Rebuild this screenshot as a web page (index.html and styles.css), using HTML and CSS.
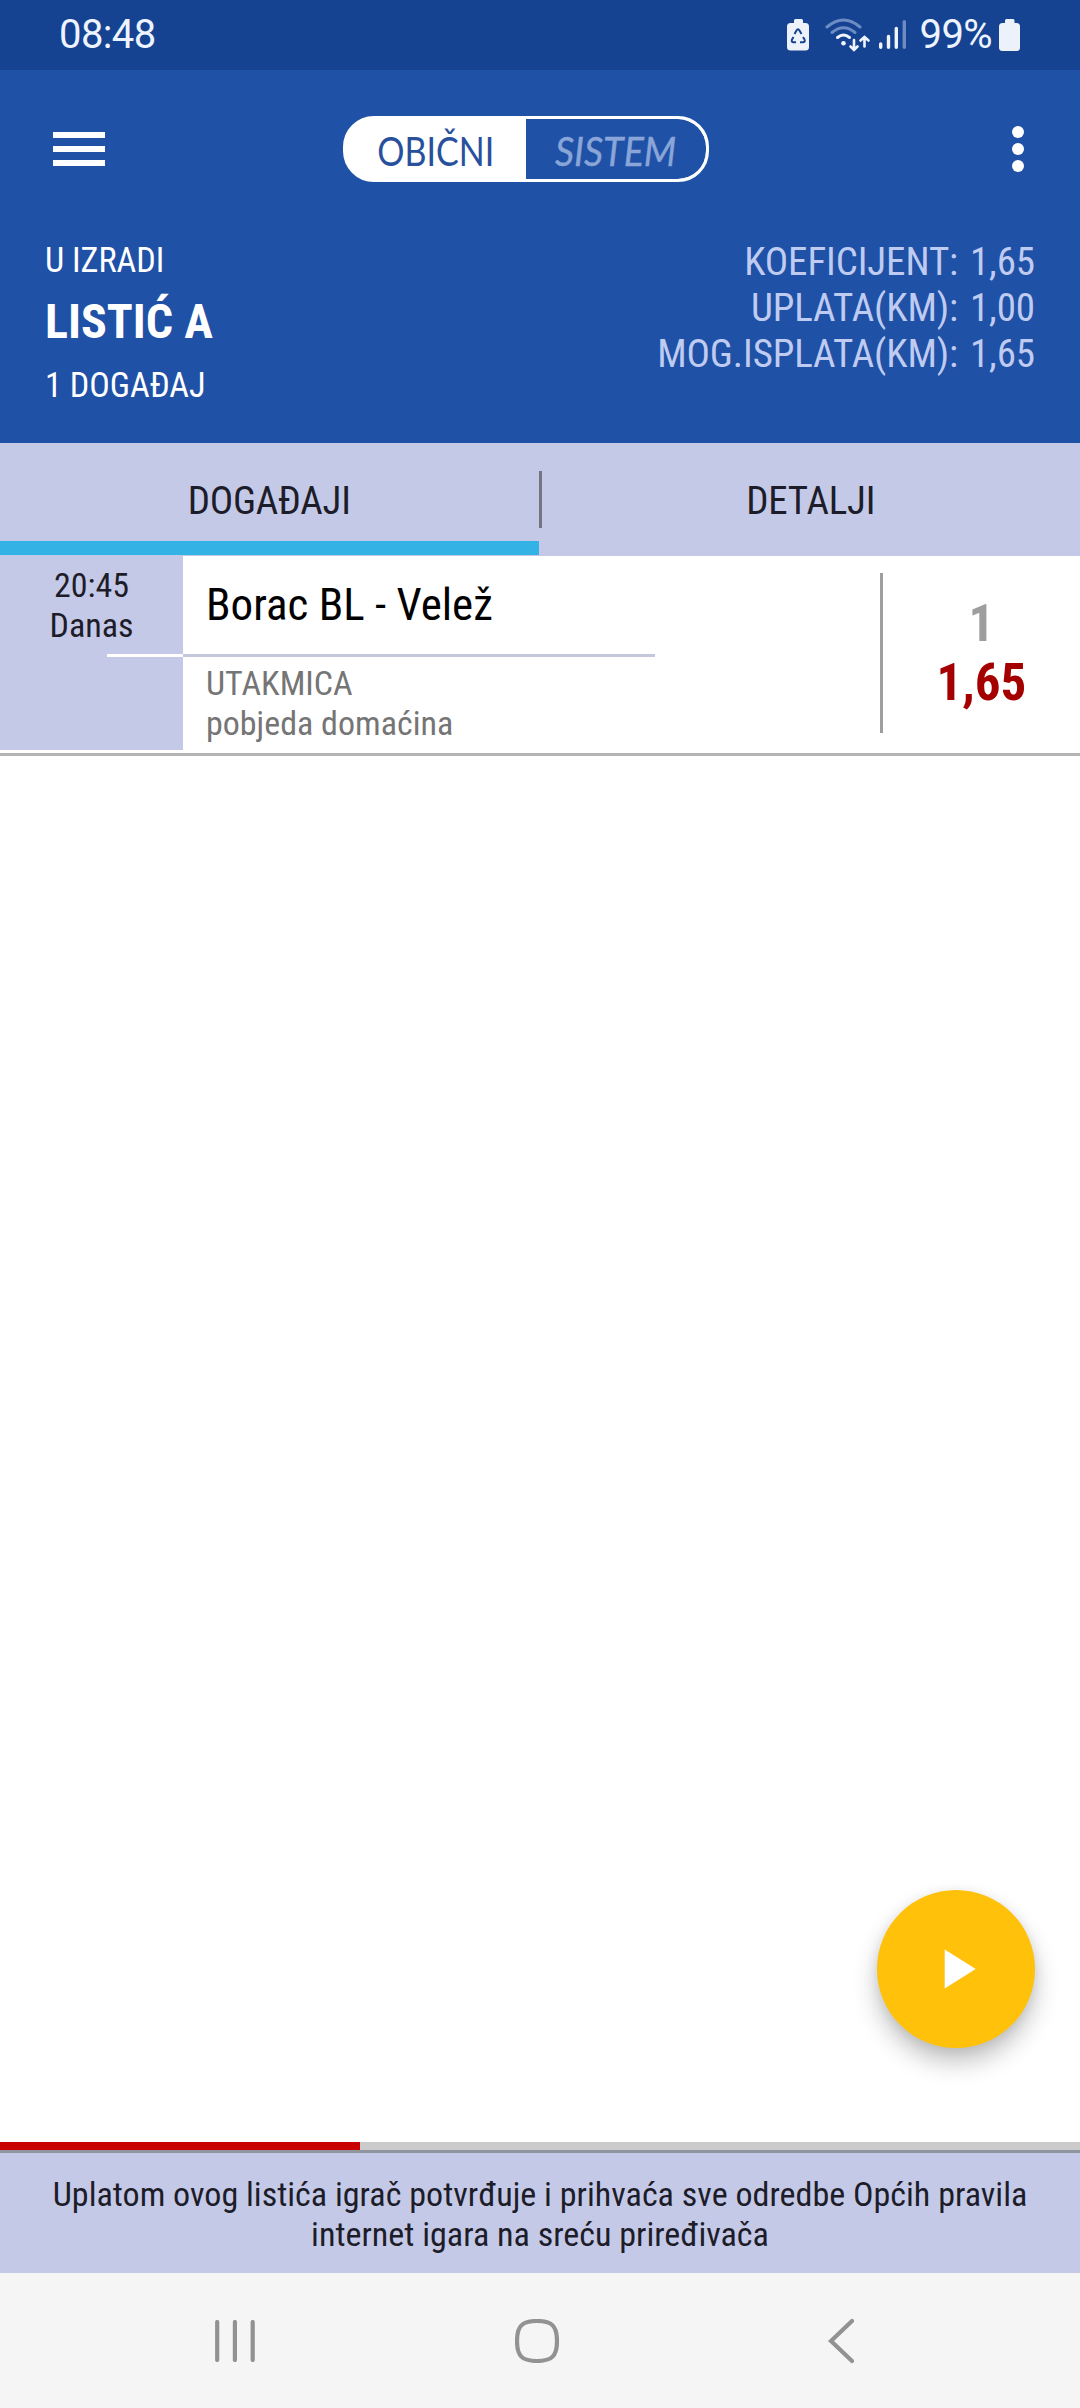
FILE: index.html
```
<!DOCTYPE html>
<html lang="bs">
<head>
    <meta charset="utf-8">
    <title>Listić A</title>
    <link rel="stylesheet" href="styles.css">
</head>
<body>
  <div class="status">
      <span class="clock">08:48</span>
      <svg class="status-icons" width="122" height="36" viewBox="787 17 122 36">
          <path d="M795 22v-1.500q0-1.500 1.500-1.500h6q1.500 0 1.500 1.500v2.500h2.500q3.500 0 3.500 3.500v20.500q0 3.500-3.500 3.500h-15q-3.500 0-3.500-3.500v-20.500q0-3.500 3.500-3.500h3.500z" fill="#edf2fa"/>
          <g fill="none" stroke="#154391" stroke-width="2" stroke-linejoin="round">
              <path d="M795.500 34l2-3.500q1.500-2.500 3 0l2 3.500M804 37l1.500 2.500q1 2.700-1.500 2.700h-3M797 42.200h-2.500q-2.500 0-1.500-2.700l1.500-2.500"/>
          </g>
          <g fill="none" stroke-linecap="round">
              <path d="M828 27q16.500-14 33 0" stroke="#6d8cc4" stroke-width="3"/>
              <path d="M833 32.500q11.500-9.500 23 0" stroke="#6d8cc4" stroke-width="3"/>
              <path d="M838.500 37.500q6-5 12 0" stroke="#f0f5fd" stroke-width="3"/>
              <path d="M855 40v9.500M851.500 46.500l3.500 3.500 3.500-3.500M865.500 46.500v-9M861.500 40.500l4-3.500 4 3.500" stroke="#f0f5fd" stroke-width="2.600"/>
              <path d="M881.700 44v3.300M889.500 36.500v10.800M897.300 28.500v18.800" stroke="#f0f5fd" stroke-width="3.400"/>
              <path d="M905.300 21.700v25.600" stroke="#6d8cc4" stroke-width="3.400"/>
          </g>
          <circle cx="844.500" cy="43.300" r="2.300" fill="#f0f5fd"/>
      </svg>
      <span class="percent">99%</span>
      <svg class="battery" width="22" height="33" viewBox="0 0 22 33">
          <path d="M6 3v-1.500q0-1.500 1.500-1.500h6.500q1.500 0 1.500 1.500v2.500h2q3.500 0 3.500 3.500v21q0 3.500-3.500 3.500h-14q-3.500 0-3.500-3.500v-21q0-3.500 3.500-3.500h2.500z" fill="#edf2fa"/>
      </svg>
  </div>

  <header class="header">
      <div class="toolbar">
          <div class="menu"><i></i><i></i><i></i></div>
          <div class="toggle">
              <div class="toggle-on"><span>OBIČNI</span></div>
              <div class="toggle-off"><span>SISTEM</span></div>
          </div>
          <div class="dots"><i></i><i></i><i></i></div>
      </div>
      <div class="summary">
          <div class="ticket">
              <p>U IZRADI</p>
              <h1>LISTIĆ A</h1>
              <p>1 DOGAĐAJ</p>
          </div>
          <div class="amounts">
              <p>KOEFICIJENT: 1,65</p>
              <p>UPLATA(KM): 1,00</p>
              <p>MOG.ISPLATA(KM): 1,65</p>
          </div>
      </div>
  </header>

  <nav class="tabs">
      <a class="tab active">DOGAĐAJI</a>
      <span class="tab-divider"></span>
      <a class="tab">DETALJI</a>
  </nav>

  <main class="content">
      <div class="event">
          <div class="event-time">
              <p>20:45</p>
              <p>Danas</p>
              <div class="time-line"></div>
          </div>
          <div class="event-info">
              <h2>Borac BL - Velež</h2>
              <div class="info-line"></div>
              <p>UTAKMICA</p>
              <p>pobjeda domaćina</p>
          </div>
          <div class="event-odd">
              <span class="pick">1</span>
              <span class="odd">1,65</span>
          </div>
      </div>
      <button class="play">
          <svg width="32" height="40" viewBox="0 0 32 40"><path d="M0.700 0.500v39l31-19.500z" fill="#fff"/></svg>
      </button>
  </main>

  <footer class="footer">
      <div class="progress"><div class="progress-bar"></div></div>
      <p class="notice">Uplatom ovog listića igrač potvrđuje i prihvaća sve odredbe Općih pravila<br>internet igara na sreću priređivača</p>
  </footer>

  <div class="system-nav">
      <svg width="40" height="42" viewBox="0 0 40 42"><path d="M2.200 2v38M19.900 2v38M37.700 2v38"/></svg>
      <svg class="home" width="44" height="44" viewBox="0 0 44 44"><path d="M22 2C37 2 42 7 42 22S37 42 22 42 2 37 2 22 7 2 22 2z"/></svg>
      <svg width="26" height="46" viewBox="0 0 26 46"><path d="M24 3L3 23l21 20"/></svg>
  </div>
</body>
</html>
```
FILE: styles.css
```
*{
    box-sizing: border-box;
}
body{
    margin: 0px;
    height: 2408px;
    display: flex;
    flex-direction: column;
    background: #fff;
    color: #1d1d29;
    font-family: "Roboto Condensed", Roboto, sans-serif;
    font-stretch: 75%;
    overflow: hidden;
}
p, h1, h2{
    margin: 0px;
    white-space: nowrap;
}

.status{
    height: 70px;
    padding: 0px 59px 0px 58px;
    display: flex;
    align-items: center;
    background: #154391;
    color: #edf4ff;
    font-family: Roboto, sans-serif;
    font-stretch: 100%;
    font-size: 40px;
    line-height: 68px;
    letter-spacing: -0.600px;
}
.clock{
    flex: 1;
    padding-left: 1px;
}
.percent{
    margin: 0px 7px 0px 12px;
}

.header{
    height: 373px;
    background: #1f51a6;
    color: #fff;
}
.toolbar{
    height: 158px;
    padding: 0px 56px 0px 53px;
    display: flex;
    align-items: center;
}
.menu{
    width: 52px;
    display: grid;
    gap: 8px;
}
.menu i{
    height: 6px;
    background: #fff;
}
.toggle{
    width: 366px;
    height: 66px;
    margin: 0px auto 0px 238px;
    display: flex;
    border: solid 3px #fff;
    border-radius: 31px;
    background: #fff;
    overflow: hidden;
    font-family: Lato, sans-serif;
    font-stretch: 100%;
    font-size: 40px;
    line-height: 64px;
}
.toggle div{
    display: flex;
    justify-content: center;
}
.toggle-on{
    width: 180px;
    background: #fff;
    color: #28509c;
}
.toggle-on span{
    transform: scaleX(0.850);
}
.toggle-off{
    flex: 1;
    border-radius: 0px 28px 28px 0px;
    background: #1f51a6;
    color: #8aa5d8;
    font-style: italic;
}
.toggle-off span{
    transform: scaleX(0.940);
    -webkit-text-stroke: 0.400px #8aa5d8;
}
.dots{
    display: grid;
    gap: 5px;
}
.dots i{
    width: 12px;
    height: 12px;
    border-radius: 50%;
    background: #fff;
}

.summary{
    padding: 7px 45px 0px;
    display: flex;
    justify-content: space-between;
}
.ticket{
    padding-top: 4px;
    font-size: 34.200px;
    line-height: 42px;
}
.ticket h1{
    margin: 12px 0px 13px;
    font-size: 48px;
    line-height: 58px;
}
.amounts{
    padding-top: 4px;
    color: #bfcbf0;
    font-size: 39px;
    line-height: 46px;
    letter-spacing: -0.100px;
    word-spacing: 3px;
    text-align: right;
}

.tabs{
    height: 113px;
    display: flex;
    background: #c5c9e8;
    font-size: 39px;
    line-height: 117px;
    letter-spacing: -0.200px;
    text-align: center;
}
.tab{
    flex: 1;
}
.tab.active{
    border-bottom: solid 14px #33b3e5;
    height: 112px;
}
.tab-divider{
    width: 3px;
    height: 57px;
    margin-top: 28px;
    background: #73757f;
}

.content{
    flex: 1;
    position: relative;
}
.event{
    height: 200px;
    display: flex;
    border-bottom: solid 3px #b4b4b4;
}
.event-time{
    width: 183px;
    height: 194px;
    padding-top: 9px;
    background: #c5c9e8;
    font-size: 34px;
    line-height: 40px;
    text-align: center;
}
.time-line{
    height: 3px;
    margin: 9px 0px 0px 107px;
    background: #fff;
}
.event-info{
    flex: 1;
    color: #757575;
    font-size: 34px;
    line-height: 40px;
}
.event-info h2{
    height: 98px;
    padding-left: 23px;
    color: #000;
    font-size: 45px;
    font-weight: 400;
    line-height: 98px;
}
.info-line{
    width: 472px;
    height: 3px;
    margin-bottom: 6px;
    background: #c5c8da;
}
.event-info p{
    padding-left: 23px;
}
.event-odd{
    width: 200px;
    height: 160px;
    margin-top: 17px;
    padding-top: 21px;
    border-left: solid 3px #9e9e9e;
    display: flex;
    flex-direction: column;
    align-items: center;
    font-size: 51px;
    font-weight: 700;
    line-height: 59px;
}
.pick{
    color: #9e9e9e;
}
.odd{
    color: #a50000;
}
/* floating button over the list */
.play{
    position: absolute;
    right: 45px;
    bottom: 94px;
    width: 158px;
    height: 158px;
    padding: 0px 0px 0px 8px;
    display: flex;
    align-items: center;
    justify-content: center;
    border: none;
    border-radius: 50%;
    background: #ffc10a;
    box-shadow: 0px 14px 24px rgba(0,0,0,0.24), 0px 2px 12px rgba(0,0,0,0.08);
}

.footer{
    height: 131px;
    background: #c5c9e8;
}
.progress{
    height: 11px;
    background: #cbcbcb;
    border-bottom: solid 3px #9096a0;
}
.progress-bar{
    width: 360px;
    height: 8px;
    background: #c80000;
}
.notice{
    padding-top: 21px;
    font-size: 34.100px;
    line-height: 40px;
    text-align: center;
}

.system-nav{
    height: 135px;
    padding: 0px 226px 0px 215px;
    display: flex;
    align-items: center;
    justify-content: space-between;
    background: #f5f5f5;
}
.system-nav svg{
    fill: none;
    stroke: #929292;
    stroke-width: 4.200;
    stroke-linecap: round;
}
.system-nav .home{
    margin-right: 9px;
}
```
